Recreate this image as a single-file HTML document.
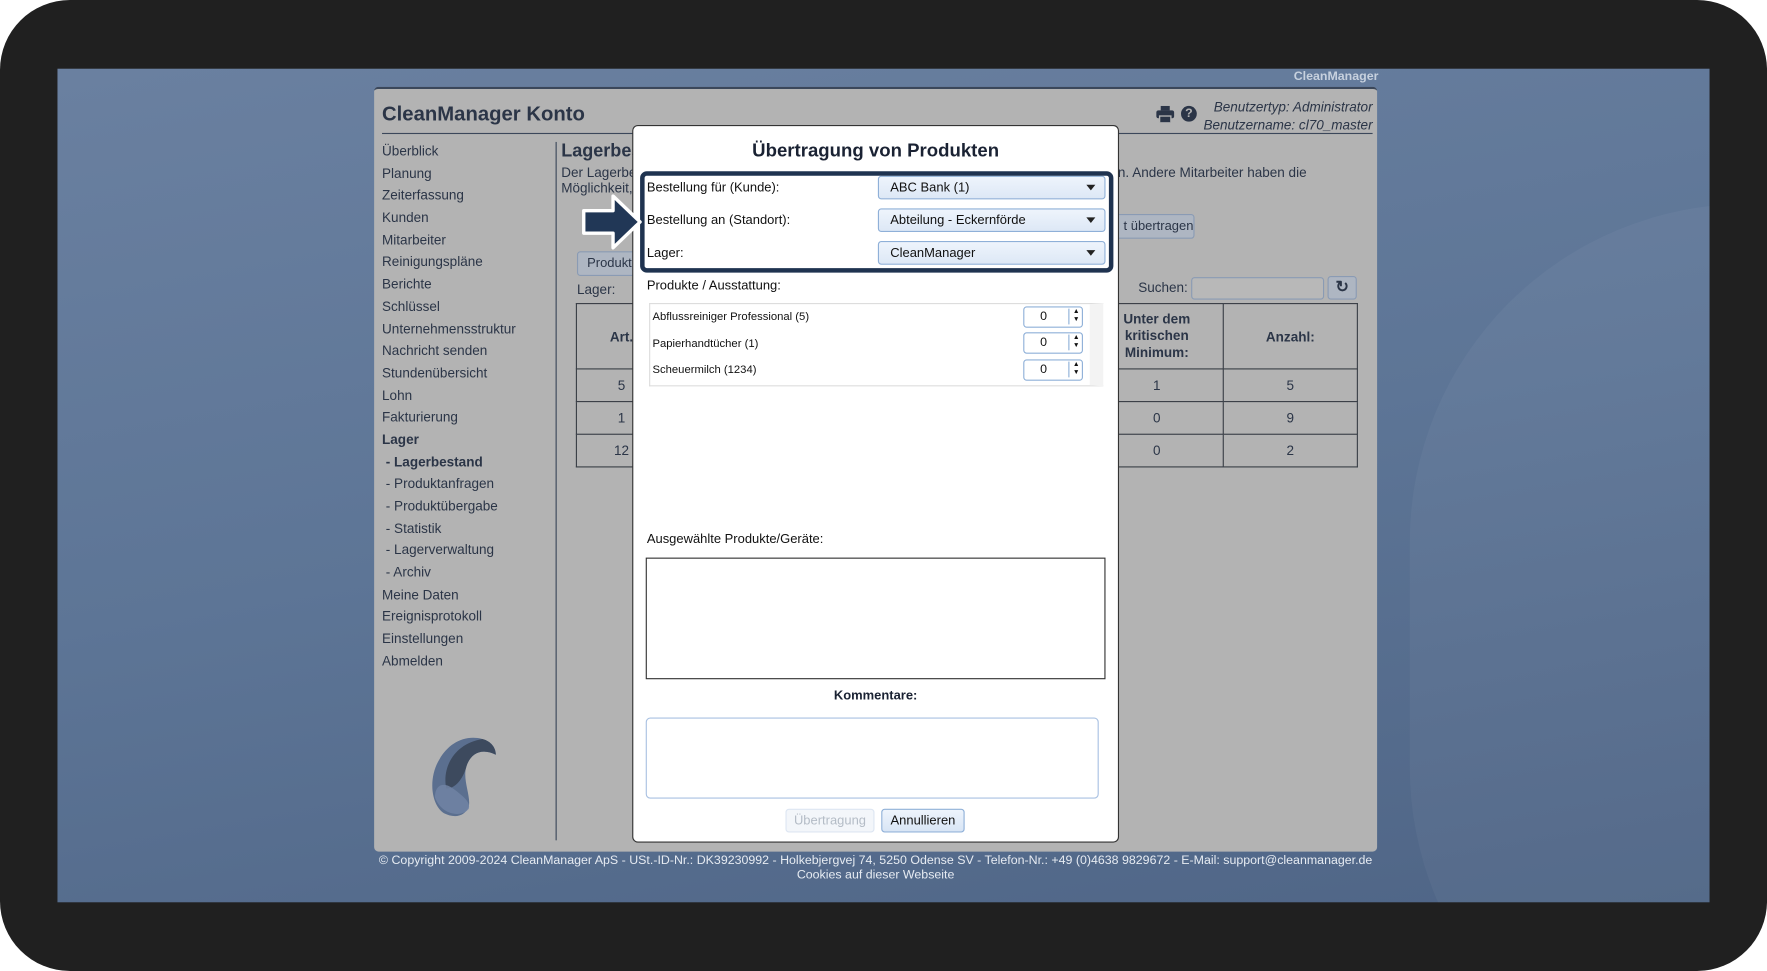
<!DOCTYPE html>
<html><head><meta charset="utf-8"><style>
*{box-sizing:border-box;margin:0;padding:0}
html,body{width:1767px;height:971px;overflow:hidden;background:#fff;font-family:"Liberation Sans",sans-serif}
#s{position:absolute;left:0;top:0;width:1568px;height:862px;transform:scale(1.12692,1.12645);transform-origin:0 0;overflow:hidden}
.a{position:absolute}
.frame{left:0;top:0;width:1568px;height:862px;background:#202020;border-radius:62px}
.bg{left:51px;top:61px;width:1466px;height:740px;background:linear-gradient(170deg,#6a80a0 0%,#5d7596 50%,#4f6586 100%);overflow:hidden}
.panel{left:332px;top:77px;width:890px;height:679px;background:#b3b3b3;border-radius:4px;border-top:2px solid #3b475a}
.t{color:#2b3547;font-size:12px;white-space:nowrap}
.side div{height:19.7px;font-size:12px;color:#2b3547}
table{border-collapse:collapse;table-layout:fixed}
td{border:1px solid #3a3f47;text-align:center;font-size:12px;color:#2b3547}
.modal{left:561px;top:111px;width:432px;height:637px;background:#fff;border-radius:5px;border:1px solid #333}
.sel{position:absolute;left:217px;width:202px;height:21px;border:1px solid #8fb0d8;border-radius:3px;background:linear-gradient(#eef4fc,#dde8f6);font-size:11.5px;padding:4px 10px 0;color:#111}
.sel:after{content:"";position:absolute;right:8px;top:7px;border:4px solid transparent;border-top:5px solid #222}
.num{position:absolute;width:53px;height:19px;border:1px solid #8fb0d8;border-radius:3px;font-size:11px;padding:2px 0 0 14px;color:#111}
.num:after{content:"▲\A▼";white-space:pre;position:absolute;right:2px;top:1px;font-size:6px;line-height:7px;border-left:1px solid #8fb0d8;padding-left:3px}
.lbl{position:absolute;left:12px;font-size:11.5px;color:#111;white-space:nowrap}
</style></head><body><div id="s">
<div class="a frame"></div>
<div class="a bg"><div class="a" style="left:1200px;top:120px;width:600px;height:800px;border-radius:300px;background:rgba(255,255,255,.04)"></div></div>
<div class="a" style="left:1148px;top:62px;font-size:11px;font-weight:bold;color:#c7d1de">CleanManager</div>
<div class="a panel"></div>
<div class="a t" style="left:339px;top:91px;font-size:18px;font-weight:bold">CleanManager Konto</div>
<div class="a" style="left:339px;top:118px;width:879px;height:1px;background:#3b475a"></div>
<svg class="a" style="left:1026px;top:94px" width="16" height="15" viewBox="0 0 16 15"><rect x="4" y="0" width="8" height="4" fill="#2b3547"/><rect x="0" y="4" width="16" height="7" rx="2" fill="#2b3547"/><rect x="3" y="9" width="10" height="6" fill="#2b3547" stroke="#b3b3b3" stroke-width="1.2"/></svg>
<div class="a" style="left:1048px;top:94px;width:14px;height:14px;border-radius:50%;background:#2b3547;color:#b3b3b3;font-size:11px;font-weight:bold;text-align:center;line-height:14px">?</div>
<div class="a t" style="left:1058px;top:87px;font-style:italic;text-align:right;width:160px;line-height:16px">Benutzertyp: Administrator<br>Benutzername: cl70_master</div>
<div class="a side" style="left:339px;top:127px">
<div>Überblick</div><div>Planung</div><div>Zeiterfassung</div><div>Kunden</div><div>Mitarbeiter</div><div>Reinigungspläne</div><div>Berichte</div><div>Schlüssel</div><div>Unternehmensstruktur</div><div>Nachricht senden</div><div>Stundenübersicht</div><div>Lohn</div><div>Fakturierung</div><div style="font-weight:bold">Lager</div><div style="font-weight:bold">&nbsp;- Lagerbestand</div><div>&nbsp;- Produktanfragen</div><div>&nbsp;- Produktübergabe</div><div>&nbsp;- Statistik</div><div>&nbsp;- Lagerverwaltung</div><div>&nbsp;- Archiv</div><div>Meine Daten</div><div>Ereignisprotokoll</div><div>Einstellungen</div><div>Abmelden</div></div>
<div class="a" style="left:493px;top:126px;width:1px;height:620px;background:#3b475a"></div>
<svg class="a" style="left:378px;top:650px" width="66" height="76" viewBox="0 0 66 76"><path d="M16 72C4 64 2 40 12 24C20 10 34 2 50 6C58 8 62 14 62 20C50 14 40 18 36 30C32 42 40 56 38 66C34 76 24 76 16 72Z" fill="#5b6f8f"/><path d="M18 50C14 30 26 10 50 6C58 8 62 14 62 20C50 14 40 18 36 30C34 38 28 50 18 50Z" fill="#3d4a5e"/><path d="M8 58C8 46 16 44 24 50C32 56 40 62 38 68C32 76 14 74 8 58Z" fill="#7184a4" opacity=".85"/></svg>
<div class="a t" style="left:498px;top:126px;font-size:16px;font-weight:bold">Lagerbestand</div>
<div class="a t" style="left:498px;top:146px;line-height:14px">Der Lagerbestand ...<br>Möglichkeit, ...</div>
<div class="a t" style="left:992px;top:146px">n. Andere Mitarbeiter haben die</div>
<div class="a t" style="left:960px;top:190px;width:100px;height:22px;border:1px solid #8a9bb4;border-radius:3px;background:#aeb6c2;font-size:11.5px;padding:4px 0 0 36px">t übertragen</div>
<div class="a t" style="left:512px;top:223px;width:60px;height:22px;border:1px solid #8a9bb4;border-radius:3px;background:#aeb6c2;font-size:11.5px;padding:4px 8px">Produkt</div>
<div class="a t" style="left:512px;top:250px">Lager:</div>
<div class="a t" style="left:1010px;top:248px">Suchen:</div>
<div class="a" style="left:1057px;top:246px;width:118px;height:20px;border:1px solid #8a9bb4;border-radius:3px;background:#b8b8b8"></div>
<div class="a" style="left:1178px;top:245px;width:26px;height:21px;border:1px solid #8a9bb4;border-radius:3px;background:#aeb6c2;text-align:center;font-size:14px;font-weight:bold;color:#2b3547">&#8635;</div>
<table class="a" style="left:511px;top:269px;width:694px">
<tr style="height:58px"><td style="width:80px;font-weight:bold">Art.</td><td style="width:376px"></td><td style="width:118px;font-weight:bold;line-height:15px">Unter dem<br>kritischen<br>Minimum:</td><td style="font-weight:bold">Anzahl:</td></tr>
<tr style="height:29px"><td>5</td><td></td><td>1</td><td>5</td></tr>
<tr style="height:29px"><td>1</td><td></td><td>0</td><td>9</td></tr>
<tr style="height:29px"><td>12</td><td></td><td>0</td><td>2</td></tr></table>
<div class="a" style="left:300px;top:758px;width:954px;text-align:center;color:#e6ebf2;font-size:11px;line-height:13px">© Copyright 2009-2024 CleanManager ApS - USt.-ID-Nr.: DK39230992 - Holkebjergvej 74, 5250 Odense SV - Telefon-Nr.: +49 (0)4638 9829672 - E-Mail: support@cleanmanager.de<br>Cookies auf dieser Webseite</div>

<div class="a modal">
<div style="position:absolute;top:13px;width:100%;text-align:center;font-size:16.5px;font-weight:bold;color:#1a2233">Übertragung von Produkten</div>
<div class="lbl" style="top:49px">Bestellung für (Kunde):</div>
<div class="lbl" style="top:78px">Bestellung an (Standort):</div>
<div class="lbl" style="top:107px">Lager:</div>
<div class="sel" style="top:44px">ABC Bank (1)</div>
<div class="sel" style="top:73px">Abteilung - Eckernförde</div>
<div class="sel" style="top:102px">CleanManager</div>
<div class="lbl" style="top:136px">Produkte / Ausstattung:</div>
<div style="position:absolute;left:14px;top:157px;width:403px;height:74px;border:1px solid #ddd;border-right:12px solid #f3f3f3"></div>
<div class="lbl" style="left:17px;top:164px;font-size:10px">Abflussreiniger Professional (5)</div>
<div class="lbl" style="left:17px;top:188px;font-size:10px">Papierhandtücher (1)</div>
<div class="lbl" style="left:17px;top:211px;font-size:10px">Scheuermilch (1234)</div>
<div class="num" style="left:346px;top:160px">0</div>
<div class="num" style="left:346px;top:183px">0</div>
<div class="num" style="left:346px;top:207px">0</div>
<div class="lbl" style="top:361px">Ausgewählte Produkte/Geräte:</div>
<div style="position:absolute;left:11px;top:383px;width:408px;height:108px;border:1px solid #333"></div>
<div style="position:absolute;top:500px;width:100%;text-align:center;font-size:11.5px;font-weight:bold;color:#1a2233">Kommentare:</div>
<div style="position:absolute;left:11px;top:525px;width:402px;height:72px;border:1px solid #a9c1e2;border-radius:4px"></div>
<div style="position:absolute;left:135px;top:606px;width:79px;height:21px;border:1px solid #dde6f2;border-radius:3px;background:#f3f6fa;color:#b4bcc6;font-size:11.5px;text-align:center;padding-top:4px">Übertragung</div>
<div style="position:absolute;left:220px;top:606px;width:74px;height:21px;border:1px solid #8fb0d8;border-radius:3px;background:linear-gradient(#eef4fc,#d8e5f5);color:#111;font-size:11.5px;text-align:center;padding-top:4px">Annullieren</div>
</div>
<div class="a" style="left:568px;top:152px;width:420px;height:90px;border:4px solid #1f3350;border-radius:6px"></div>
<svg class="a" style="left:514px;top:170px" width="58" height="54" viewBox="0 0 58 54"><path d="M4 17H30V4L54 27L30 50V37H4Z" fill="#213756" stroke="#fff" stroke-width="3" stroke-linejoin="round"/></svg>
</div></body></html>
